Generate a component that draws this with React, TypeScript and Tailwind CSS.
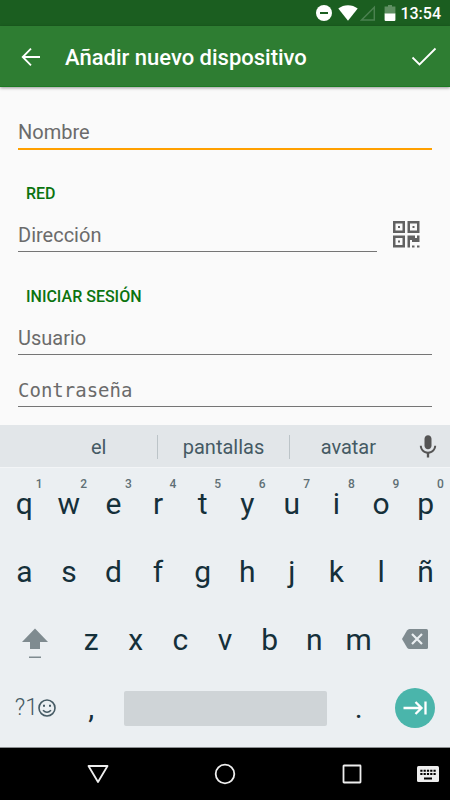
import { useState } from "react";

const sugerencias = [
    { texto: "el", ancho: "flex-[9]" },
    { texto: "pantallas", ancho: "flex-[10]" },
    { texto: "avatar", ancho: "flex-[9]" },
];
const filaNumeros = ["q", "w", "e", "r", "t", "y", "u", "i", "o", "p"];
const filaMedia = ["a", "s", "d", "f", "g", "h", "j", "k", "l", "ñ"];
const filaBaja = ["z", "x", "c", "v", "b", "n", "m"];

const campo =
    "block w-full min-w-0 h-9 rounded-none bg-transparent pt-0.5 text-[#444] placeholder:text-[#6b6b6b] outline-none";
const titulo = "mb-[10px] ml-2 mt-8 text-base font-medium leading-6 text-[#0b730f]";

function StatusBar() {
    return (
        <div className="flex h-[26px] items-center justify-end bg-[#1b5e20] pr-[9px] text-white">
            <svg className="mr-1.5 size-4" viewBox="0 0 16 16">
                <circle cx="8" cy="8" r="8" fill="#fff" />
                <path d="M4 8h8" stroke="#1b5e20" strokeWidth="2" />
            </svg>
            <svg className="h-4 w-5" viewBox="0 0 20 16">
                <path d="M0.3 3.6C5.8-.9 14.2-.9 19.7 3.6L10 15.8z" fill="#fff" />
            </svg>
            <svg className="ml-0.5 h-4 w-4" viewBox="0 0 16 16">
                <path d="M14.3 2.2V15H1.6z" fill="none" stroke="#4b8150" strokeWidth="1.5" />
            </svg>
            <svg className="ml-2 h-4 w-3" viewBox="0 0 12 16">
                <path d="M4 0h4v1.6h3.4V9H.6V1.6H4z" fill="#5f8f62" />
                <path d="M.6 8.5h10.8V15q0 1-1 1H1.6q-1 0-1-1z" fill="#fff" />
            </svg>
            <span className="ml-1 pt-0.5 text-base font-medium">13:54</span>
        </div>
    );
}

function QrIcon() {
    return (
        <svg className="size-[27px]" viewBox="0 0 27 27" fill="#616161">
            <path
                fillRule="evenodd"
                d="M0 0h12v12H0zM2.5 2.5v7h7v-7zM14.5 0h12v12h-12zM17 2.5v7h7v-7zM0 14.5h12v12H0zM2.5 17v7h7v-7z"
            />
            <path d="M5 5h2v2H5zM19.5 5h2v2h-2zM5 19.5h2v2H5z" />
            <path d="M14.5 14.5h7.5V17h2v-2.5h2.5V21H19v-2h-2v7.5h-2.5zM19 24.5h2.5v2H19zM24 24.5h2.5v2H24z" />
        </svg>
    );
}

function Tecla({ letra, numero }: { letra: string; numero?: number }) {
    return (
        <button className="relative flex-1 text-center text-3xl text-[#15303a]">
            {letra}
            {numero !== undefined && (
                <span className="absolute right-1 top-1.5 text-xs font-medium text-[#5f6f75]">
                    {numero}
                </span>
            )}
        </button>
    );
}

function Teclado() {
    return (
        <section aria-label="Teclado" className="bg-[#ebeff2]">
            <div className="flex h-[43px] items-center border-b border-[#f3f5f7] bg-[#e2e6e9] pl-10 pt-0.5 text-xl text-[#455a64]">
                <div className="flex flex-1 divide-x divide-[#bcc4c8]">
                    {sugerencias.map((s) => (
                        <button key={s.texto} className={"h-6 leading-6 " + s.ancho}>
                            {s.texto}
                        </button>
                    ))}
                </div>
                <button aria-label="Dictar" className="ml-[7px] mr-2">
                    <svg className="size-7" viewBox="0 0 24 24" fill="#555">
                        <path d="M12 14c1.66 0 3-1.34 3-3V5c0-1.66-1.34-3-3-3S9 3.34 9 5v6c0 1.66 1.34 3 3 3z" />
                        <path d="M17.3 11c0 3-2.54 5.1-5.3 5.1S6.7 14 6.7 11H5c0 3.41 2.72 6.23 6 6.72V21h2v-3.28c3.28-.48 6-3.3 6-6.72z" />
                    </svg>
                </button>
            </div>
            <div className="px-0.5 pb-[5px] pt-0.5">
                <div className="flex h-17">
                    {filaNumeros.map((l, i) => (
                        <Tecla key={l} letra={l} numero={(i + 1) % 10} />
                    ))}
                </div>
                <div className="flex h-17">
                    {filaMedia.map((l) => (
                        <Tecla key={l} letra={l} />
                    ))}
                </div>
                <div className="flex h-17">
                    <button aria-label="Mayúsculas" className="flex flex-[1.5] items-center justify-center">
                        <svg className="h-9 w-7" viewBox="0 0 28 36" fill="#7f8b90">
                            <path d="M14 6.5L27 20H19V27H9V20H1zM8 34.5h12V36H8z" />
                        </svg>
                    </button>
                    <div className="flex flex-[7]">
                        {filaBaja.map((l) => (
                            <Tecla key={l} letra={l} />
                        ))}
                    </div>
                    <button aria-label="Borrar" className="flex flex-[1.5] items-center justify-center">
                        <svg className="h-6 w-7" viewBox="0 0 28 24">
                            <path
                                d="M8.5 1H25.5q1.5 0 1.5 1.5v17q0 1.5-1.5 1.5H8.5Q7 21 6 19.5L1 11L6 2.5Q7 1 8.5 1z"
                                fill="#7f8b90"
                            />
                            <path d="M11 6l10 10M21 6L11 16" stroke="#ebeff2" strokeWidth="2.2" />
                        </svg>
                    </button>
                </div>
                <div className="flex h-17 items-center">
                    <button className="flex flex-[1.5] items-center justify-center text-[23px] font-light text-[#455a64]">
                        ?1
                        <svg
                            className="size-[18px]"
                            viewBox="0 0 18 18"
                            fill="none"
                            stroke="#455a64"
                            strokeWidth="1.6"
                        >
                            <circle cx="9" cy="9" r="8" />
                            <path d="M5 11.2q4 4 8 0" />
                            <path d="M5 6.7h2M11 6.7h2" strokeWidth="2" />
                        </svg>
                    </button>
                    <Tecla letra="," />
                    <div className="flex flex-[5]">
                        <button aria-label="Espacio" className="mx-[10px] h-[35px] flex-1 rounded-xs bg-[#cfd4d7]" />
                    </div>
                    <Tecla letra="." />
                    <div className="flex flex-[1.5] justify-center">
                        <button
                            aria-label="Siguiente"
                            className="flex size-10 items-center justify-center rounded-full bg-[#4ab5ab]"
                        >
                            <svg
                                className="h-4 w-6"
                                viewBox="0 0 24 16"
                                fill="none"
                                stroke="#fff"
                                strokeWidth="2.3"
                            >
                                <path d="M0.5 8H18M12.5 2L18.5 8L12.5 14M22.5 1.5v13" />
                            </svg>
                        </button>
                    </div>
                </div>
            </div>
        </section>
    );
}

function NavBar() {
    return (
        <nav className="flex h-[53px] items-center border-t border-[#8c8f91] bg-black pl-[34px]">
            <button aria-label="Atrás" className="flex flex-1 justify-center">
                <svg className="size-[22px]" viewBox="0 0 22 22" fill="none" stroke="#eee" strokeWidth="1.8">
                    <path d="M1.5 3h19L11 19z" strokeLinejoin="round" />
                </svg>
            </button>
            <button aria-label="Inicio" className="flex flex-1 justify-center">
                <svg className="size-[22px]" viewBox="0 0 22 22" fill="none" stroke="#eee" strokeWidth="1.8">
                    <circle cx="11" cy="11" r="9.3" />
                </svg>
            </button>
            <button aria-label="Recientes" className="flex flex-1 justify-center">
                <svg className="size-[22px]" viewBox="0 0 22 22" fill="none" stroke="#eee" strokeWidth="1.8">
                    <rect x="2.5" y="2.5" width="17" height="17" rx="0.5" />
                </svg>
            </button>
            <button aria-label="Cambiar teclado" className="ml-px mr-[11px]">
                <svg className="h-4 w-[22px]" viewBox="0 0 22 16">
                    <rect width="22" height="16" rx="1.5" fill="#eee" />
                    <path
                        d="M3.3 4.8h15.4M3.3 8h15.4"
                        stroke="#000"
                        strokeWidth="2"
                        strokeDasharray="2.2 1.1"
                    />
                    <path d="M7 12.5h8" stroke="#000" strokeWidth="2" />
                </svg>
            </button>
        </nav>
    );
}

export default function App() {
    const [nombre, setNombre] = useState("");
    const [direccion, setDireccion] = useState("");
    const [usuario, setUsuario] = useState("");
    const [clave, setClave] = useState("");

    return (
        <div className="flex min-h-screen flex-col bg-[#fafafa] font-['Roboto',sans-serif]">
            <StatusBar />
            <header className="flex h-[61px] items-center border-b border-[#1b7a22] bg-[#2e7d32] px-[13px] pt-0.5 text-white shadow-[0_1px_3px_rgba(0,0,0,0.4)]">
                <button aria-label="Atrás">
                    <svg className="size-9" viewBox="0 0 36 36" fill="none" stroke="#fff" strokeWidth="1.8">
                        <path d="M27 18H10M18 9.7L9.7 18L18 26.3" />
                    </svg>
                </button>
                <h1 className="ml-4 flex-1 text-[22px] font-medium">Añadir nuevo dispositivo</h1>
                <button aria-label="Guardar">
                    <svg className="size-[26px]" viewBox="0 0 26 26" fill="none" stroke="#fff" strokeWidth="1.8">
                        <path d="M1.5 13.5L8.5 20.5L24.5 4.5" />
                    </svg>
                </button>
            </header>
            <form className="flex-1 px-[18px] pb-[17px] pt-[27px]">
                <input
                    type="text"
                    aria-label="Nombre"
                    placeholder="Nombre"
                    value={nombre}
                    onChange={(e) => setNombre(e.target.value)}
                    className={campo + " border-b-2 border-[#ffa000] text-xl"}
                />
                <h2 className={titulo}>RED</h2>
                <div className="flex items-start">
                    <input
                        type="text"
                        aria-label="Dirección"
                        placeholder="Dirección"
                        value={direccion}
                        onChange={(e) => setDireccion(e.target.value)}
                        className={campo + " border-b border-[#757575] text-xl"}
                    />
                    <button
                        type="button"
                        aria-label="Escanear QR"
                        className="ml-4 mr-3 flex h-[37px] shrink-0 items-center"
                    >
                        <QrIcon />
                    </button>
                </div>
                <h2 className={titulo}>INICIAR SESIÓN</h2>
                <input
                    type="text"
                    aria-label="Usuario"
                    placeholder="Usuario"
                    value={usuario}
                    onChange={(e) => setUsuario(e.target.value)}
                    className={campo + " border-b border-[#757575] text-xl"}
                />
                <input
                    type="password"
                    aria-label="Contraseña"
                    placeholder="Contraseña"
                    value={clave}
                    onChange={(e) => setClave(e.target.value)}
                    className={campo + " mt-4 border-b border-[#757575] font-['DejaVu_Sans_Mono',monospace] text-[19px]"}
                />
            </form>
            <Teclado />
            <NavBar />
        </div>
    );
}
